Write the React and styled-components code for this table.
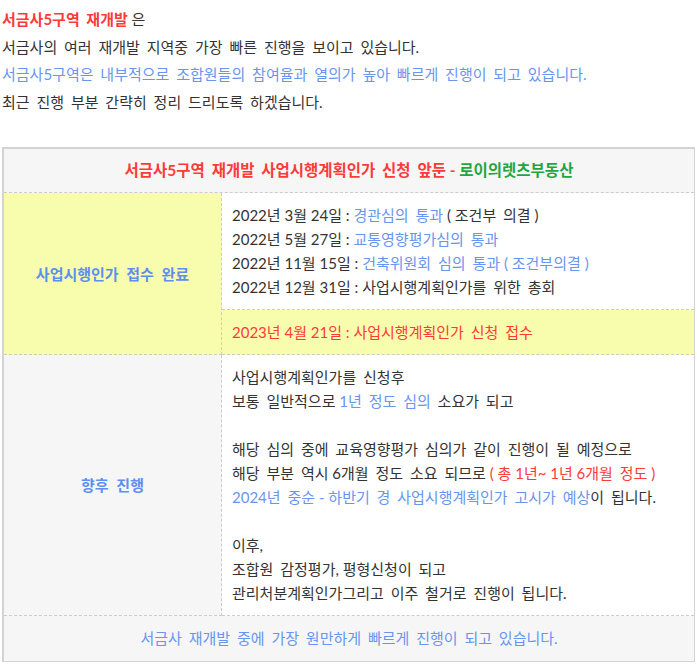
import React from "react";
import styled, { createGlobalStyle } from "styled-components";

const GlobalStyle = createGlobalStyle`
  html, body {
    margin: 0;
    padding: 0;
    background: #ffffff;
  }
  body {
    font-family: Lato, "Noto Sans CJK KR", sans-serif;
    color: #333333;
  }
`;

// the original korean font has a wider space between hangul words
const HANGUL = /[\uAC00-\uD7A3]/;

const Wide = styled.span`
  word-spacing: var(--ws, 3px);
`;

function ko(text) {
  const parts = text.split(" ");
  const out = [];
  parts.forEach((p, i) => {
    if (i > 0) {
      const prev = parts[i - 1];
      const wide = HANGUL.test(prev.slice(-1)) && HANGUL.test(p.charAt(0));
      out.push(wide ? <Wide key={"s" + i}> </Wide> : " ");
    }
    if (p) out.push(p);
  });
  return out;
}

const spaced = (children) =>
  React.Children.map(children, (ch) => (typeof ch === "string" ? ko(ch) : ch));

const Page = styled.div`
  padding: 6px 2px 10px 2px;
  font-size: 15px;
`;

const Intro = styled.div`
  line-height: 27.5px;
  margin-bottom: 31px;
`;

const LineBox = styled.div`
  min-height: ${(p) => (p.$gap ? "24px" : "auto")};
`;

const Line = ({ gap, children }) => <LineBox $gap={gap}>{spaced(children)}</LineBox>;

const Tone = styled.span`
  color: ${(p) =>
    p.$c === "red" ? "#ff3a3a" : p.$c === "blue" ? "#6a95ee" : p.$c === "green" ? "#1fa640" : "inherit"};
  font-weight: ${(p) => (p.$bold ? 700 : "inherit")};
`;

const Hi = ({ c, bold, children }) => (
  <Tone $c={c} $bold={bold}>
    {spaced(children)}
  </Tone>
);

const Table = styled.div`
  display: grid;
  grid-template-columns: 218px 1fr;
  border: 1px solid #d3d3d3;
  border-left-width: 2px;
  border-top-width: 2px;
  line-height: 24px;
`;

const Head = styled.div`
  grid-column: 1 / span 2;
  background: #f6f6f6;
  text-align: center;
  padding: 9px 10px 10px;
  font-size: 15.5px;
  font-weight: 700;
  border-bottom: 1px dashed #cccccc;
`;

const Label = styled.div`
  grid-row: span ${(p) => p.$span || 1};
  display: flex;
  align-items: center;
  justify-content: center;
  background: ${(p) => (p.$yellow ? "#f8fdae" : "#f6f6f6")};
  color: #5e8fee;
  font-weight: 700;
  --ws: 4px;
  border-right: 1px dashed #cccccc;
  border-bottom: 1px dashed #cccccc;
`;

const LabelText = styled.span`
  text-align: center;
`;

const Cell = styled.div`
  padding: 10px 10px;
  background: ${(p) => (p.$yellow ? "#f8fdae" : "#ffffff")};
  border-bottom: 1px dashed #cccccc;
`;

const Foot = styled.div`
  grid-column: 1 / span 2;
  background: #f6f6f6;
  text-align: center;
  padding: 10px 10px 11px;
  color: #6a95ee;
`;

export default function App() {
  return (
    <Page>
      <GlobalStyle />
      <Intro>
        <Line>
          <Hi c="red" bold>서금사5구역 재개발</Hi> 은
        </Line>
        <Line>서금사의 여러 재개발 지역중 가장 빠른 진행을 보이고 있습니다.</Line>
        <Line>
          <Hi c="blue">서금사5구역은 내부적으로 조합원들의 참여율과 열의가 높아 빠르게 진행이 되고 있습니다.</Hi>
        </Line>
        <Line>최근 진행 부분 간략히 정리 드리도록 하겠습니다.</Line>
      </Intro>

      <Table>
        <Head>
          <Hi c="red">서금사5구역 재개발 사업시행계획인가 신청 앞둔 - </Hi>
          <Hi c="green">로이의렛츠부동산</Hi>
        </Head>

        <Label $yellow $span={2}>
          <LabelText>{ko("사업시행인가 접수 완료")}</LabelText>
        </Label>
        <Cell>
          <Line>
            2022년 3월 24일 : <Hi c="blue">경관심의 통과</Hi> ( 조건부 의결 )
          </Line>
          <Line>
            2022년 5월 27일 : <Hi c="blue">교통영향평가심의 통과</Hi>
          </Line>
          <Line>
            2022년 11월 15일 : <Hi c="blue">건축위원회 심의 통과 ( 조건부의결 )</Hi>
          </Line>
          <Line>2022년 12월 31일 : 사업시행계획인가를 위한 총회</Line>
        </Cell>
        <Cell $yellow>
          <Hi c="red">2023년 4월 21일 : 사업시행계획인가 신청 접수</Hi>
        </Cell>

        <Label>
          <LabelText>{ko("향후 진행")}</LabelText>
        </Label>
        <Cell>
          <Line>사업시행계획인가를 신청후</Line>
          <Line>
            보통 일반적으로 <Hi c="blue">1년 정도 심의</Hi>
            <Wide> </Wide>소요가 되고
          </Line>
          <Line gap />
          <Line>해당 심의 중에 교육영향평가 심의가 같이 진행이 될 예정으로</Line>
          <Line>
            해당 부분 역시 6개월 정도 소요 되므로 <Hi c="red">( 총 1년~ 1년 6개월 정도 )</Hi>
          </Line>
          <Line>
            <Hi c="blue">2024년 중순 - 하반기 경 사업시행계획인가 고시가 예상</Hi>이 됩니다.
          </Line>
          <Line gap />
          <Line>이후,</Line>
          <Line>조합원 감정평가, 평형신청이 되고</Line>
          <Line>관리처분계획인가그리고 이주 철거로 진행이 됩니다.</Line>
        </Cell>

        <Foot>{ko("서금사 재개발 중에 가장 원만하게 빠르게 진행이 되고 있습니다.")}</Foot>
      </Table>
    </Page>
  );
}
